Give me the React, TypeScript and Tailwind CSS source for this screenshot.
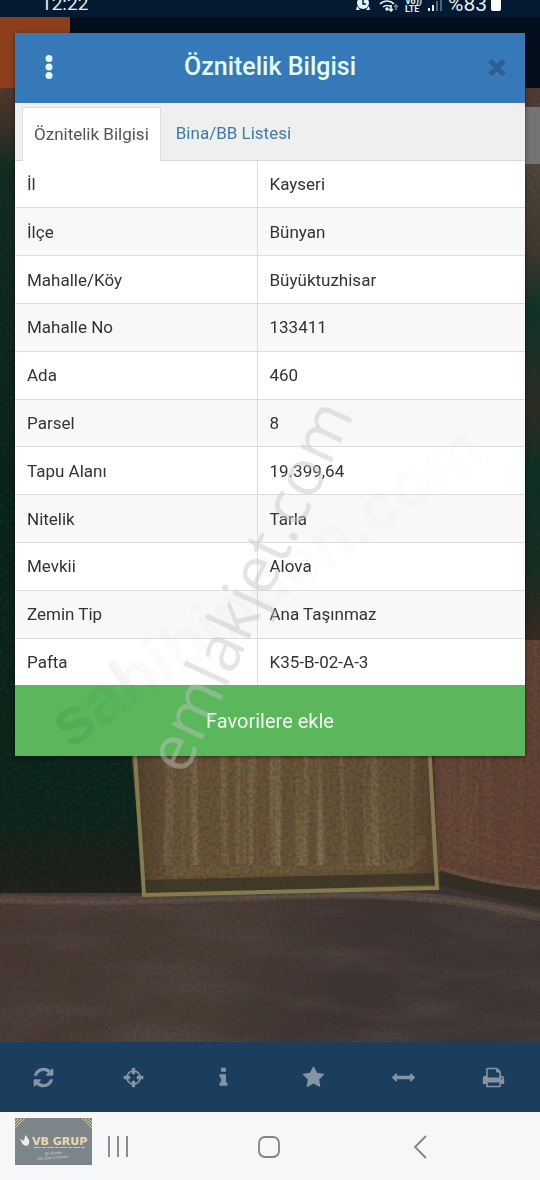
import React from 'react';

const rows: [string, string][] = [
  ['İl', 'Kayseri'],
  ['İlçe', 'Bünyan'],
  ['Mahalle/Köy', 'Büyüktuzhisar'],
  ['Mahalle No', '133411'],
  ['Ada', '460'],
  ['Parsel', '8'],
  ['Tapu Alanı', '19.399,64'],
  ['Nitelik', 'Tarla'],
  ['Mevkii', 'Alova'],
  ['Zemin Tip', 'Ana Taşınmaz'],
  ['Pafta', 'K35-B-02-A-3'],
];

const tools = [
  {
    label: 'Yenile',
    d: 'M1639 1056q0 5-1 7-64 268-268 434.5t-478 166.5q-146 0-282.5-55t-243.5-157l-129 129q-19 19-45 19t-45-19-19-45v-448q0-26 19-45t45-19h448q26 0 45 19t19 45-19 45l-137 137q71 66 161 102t187 36q134 0 250-65t186-179q11-17 53-117 8-23 30-23h192q13 0 22.5 9.5t9.5 22.5zm25-800v448q0 26-19 45t-45 19h-448q-26 0-45-19t-19-45 19-45l138-138q-148-137-349-137-134 0-250 65t-186 179q-11 17-53 117-8 23-30 23h-199q-13 0-22.5-9.5t-9.5-22.5v-7q65-268 270-434.5t480-166.5q146 0 284 55.5t245 156.5l130-129q19-19 45-19t45 19 19 45z',
  },
  {
    label: 'Konum',
    d: 'M1325 1024h-109q-26 0-45-19t-19-45v-128q0-26 19-45t45-19h109q-32-108-112.5-188.5t-188.5-112.5v109q0 26-19 45t-45 19h-128q-26 0-45-19t-19-45v-109q-108 32-188.5 112.5t-112.5 188.5h109q26 0 45 19t19 45v128q0 26-19 45t-45 19h-109q32 108 112.5 188.5t188.5 112.5v-109q0-26 19-45t45-19h128q26 0 45 19t19 45v109q108-32 188.5-112.5t112.5-188.5zm339-192v128q0 26-19 45t-45 19h-143q-37 161-154.5 278.5t-278.5 154.5v143q0 26-19 45t-45 19h-128q-26 0-45-19t-19-45v-143q-161-37-278.5-154.5t-154.5-278.5h-143q-26 0-45-19t-19-45v-128q0-26 19-45t45-19h143q37-161 154.5-278.5t278.5-154.5v-143q0-26 19-45t45-19h128q26 0 45 19t19 45v143q161 37 278.5 154.5t154.5 278.5h143q26 0 45 19t19 45z',
  },
  {
    label: 'Bilgi',
    d: 'M1216 1344v128q0 26-19 45t-45 19h-512q-26 0-45-19t-19-45v-128q0-26 19-45t45-19h64v-384h-64q-26 0-45-19t-19-45v-128q0-26 19-45t45-19h384q26 0 45 19t19 45v576h64q26 0 45 19t19 45zm-128-1152v192q0 26-19 45t-45 19h-256q-26 0-45-19t-19-45v-192q0-26 19-45t45-19h256q26 0 45 19t19 45z',
  },
  {
    label: 'Favoriler',
    d: 'M1728 647q0 22-26 48l-363 354 86 500q1 7 1 20 0 21-10.5 35.5t-30.5 14.5q-19 0-40-12l-449-236-449 236q-22 12-40 12-21 0-31.5-14.5t-10.5-35.5q0-6 2-20l86-500-364-354q-25-27-25-48 0-37 56-46l502-73 225-455q19-41 49-41t49 41l225 455 502 73q56 9 56 46z',
  },
  {
    label: 'Ölçüm',
    d: 'M1792 896q0 26-19 45l-256 256q-19 19-45 19t-45-19-19-45v-128h-1024v128q0 26-19 45t-45 19-45-19l-256-256q-19-19-19-45t19-45l256-256q19-19 45-19t45 19 19 45v128h1024v-128q0-26 19-45t45-19 45 19l256 256q19 19 19 45z',
  },
  {
    label: 'Yazdır',
    d: 'M448 1536h896v-256h-896v256zm0-640h896v-384h-160q-40 0-68-28t-28-68v-160h-640v640zm1152 64q0-26-19-45t-45-19-45 19-19 45 19 45 45 19 45-19 19-45zm128 0v416q0 13-9.5 22.5t-22.5 9.5h-224v160q0 40-28 68t-68 28h-960q-40 0-68-28t-28-68v-160h-224q-13 0-22.5-9.5t-9.5-22.5v-416q0-79 56.5-135.5t135.5-56.5h64v-544q0-40 28-68t68-28h672q40 0 88 20t76 48l152 152q28 28 48 76t20 88v256h64q79 0 135.5 56.5t56.5 135.5z',
  },
];

const closePath =
  'M1490 1322q0 40-28 68l-136 136q-28 28-68 28t-68-28l-294-294-294 294q-28 28-68 28t-68-28l-136-136q-28-28-28-68t28-68l294-294-294-294q-28-28-28-68t28-68l136-136q28-28 68-28t68 28l294 294 294-294q28-28 68-28t68 28l136 136q28 28 28 68t-28 68l-294 294 294 294q28 28 28 68z';

const StatusBar: React.FC = () => (
  <div className="flex h-[17px] items-end justify-between overflow-hidden bg-[#041a30] pl-[41px] pr-[39px] pb-[2px] text-[#e4eef5]">
    <span className="text-[19px] leading-[22px]">12:22</span>
    <div className="flex items-end gap-[6px]">
      <svg className="mb-[4px] h-[16px] w-[14px]" viewBox="0 0 14 16" fill="currentColor">
        <circle cx="7" cy="8" r="6" />
        <path d="M1 11l-1 4h4zM13 11l1 4h-4z" />
        <path d="M7 5v4h3" fill="none" stroke="#041a30" strokeWidth="1.5" />
      </svg>
      <svg className="mb-[3px] ml-[3px] h-[16px] w-[20px]" viewBox="0 0 20 16" fill="none" stroke="currentColor" strokeWidth="1.6">
        <path d="M1 8c4-4 10-4 14 0M4 11c2-2 6-2 8 0" />
        <circle cx="8" cy="13" r="1" fill="currentColor" />
        <path d="M12 9v6M10 13l2 2 2-2" />
        <path d="M17 14V9m-2 2l2-2 2 2" opacity="0.5" />
      </svg>
      <span className="flex flex-col pb-[2px] text-[9px] font-bold leading-[8px]">
        <span>Vo))</span>
        <span>LTE</span>
      </span>
      <svg className="mb-[4px] h-[16px] w-[14px]" viewBox="0 0 14 16" fill="currentColor">
        <path d="M0 13h2v3H0zM4 10h2v6H4z" />
        <path d="M8 6h2v10H8zM12 2h2v14h-2z" opacity="0.35" />
      </svg>
      <span className="flex items-end gap-1">
        <span className="text-[21px] leading-[22px]">%83</span>
        <span className="mb-[4px] h-[18px] w-[10px] rounded-[2px] bg-white" />
      </span>
    </div>
  </div>
);

const SatelliteMap: React.FC = () => (
  <svg className="absolute inset-0 h-full w-full" viewBox="0 88 540 954" preserveAspectRatio="none" aria-hidden="true">
    <defs>
      <linearGradient id="leftField" x1="0" y1="0" x2="0" y2="1">
        <stop offset="0" stopColor="#54392a" />
        <stop offset="0.05" stopColor="#3a3024" />
        <stop offset="0.1" stopColor="#0e2b1f" />
        <stop offset="0.5" stopColor="#052218" />
        <stop offset="0.9" stopColor="#082419" />
        <stop offset="0.96" stopColor="#161f17" />
        <stop offset="1" stopColor="#1f2019" />
      </linearGradient>
      <linearGradient id="rightEdge" x1="0" y1="0" x2="0" y2="1">
        <stop offset="0" stopColor="#513a31" />
        <stop offset="0.12" stopColor="#554a3d" />
        <stop offset="0.3" stopColor="#40382b" />
        <stop offset="0.4" stopColor="#0d3327" />
        <stop offset="0.58" stopColor="#2b2d22" />
        <stop offset="0.7" stopColor="#0b2f23" />
        <stop offset="0.88" stopColor="#172c20" />
        <stop offset="1" stopColor="#39291e" />
      </linearGradient>
      <linearGradient id="soil" gradientUnits="userSpaceOnUse" x1="0" y1="900" x2="420" y2="1060">
        <stop offset="0" stopColor="#483831" />
        <stop offset="0.5" stopColor="#4b3e35" />
        <stop offset="0.8" stopColor="#3f3432" />
        <stop offset="1" stopColor="#403633" />
      </linearGradient>
      <linearGradient id="parcel" x1="0" y1="0" x2="1" y2="0">
        <stop offset="0" stopColor="#4f3f2b" />
        <stop offset="0.15" stopColor="#6b5537" />
        <stop offset="0.55" stopColor="#675434" />
        <stop offset="0.9" stopColor="#645236" />
        <stop offset="1" stopColor="#553c2a" />
      </linearGradient>
      <filter id="darkStreaks" x="0" y="0" width="100%" height="100%">
        <feTurbulence type="fractalNoise" baseFrequency="0.13 0.003" numOctaves="3" seed="5" />
        <feColorMatrix values="0 0 0 0 0.16  0 0 0 0 0.09  0 0 0 0 0.05  3 0 0 0 -1.3" />
      </filter>
      <filter id="lightStreaks" x="0" y="0" width="100%" height="100%">
        <feTurbulence type="fractalNoise" baseFrequency="0.11 0.003" numOctaves="3" seed="12" />
        <feColorMatrix values="0 0 0 0 0.58  0 0 0 0 0.46  0 0 0 0 0.29  3 0 0 0 -1.4" />
      </filter>
      <filter id="soilBands" x="0" y="0" width="100%" height="100%">
        <feTurbulence type="fractalNoise" baseFrequency="0.009 0.035" numOctaves="5" seed="21" />
        <feColorMatrix values="0 0 0 0 0.1  0 0 0 0 0.07  0 0 0 0 0.06  2.4 0 0 0 -1" />
      </filter>
      <filter id="grain" x="0" y="0" width="100%" height="100%">
        <feTurbulence type="fractalNoise" baseFrequency="0.3" numOctaves="3" seed="8" />
        <feColorMatrix values="0 0 0 0 0.03  0 0 0 0 0.03  0 0 0 0 0.03  1.6 0 0 0 -0.6" />
      </filter>
      <clipPath id="parcelClip">
        <path d="M134 740H431l6 134-294 8z" />
      </clipPath>
      <clipPath id="redClip">
        <path d="M433 640h107v245l-50-5-48-12z" />
      </clipPath>
    </defs>
    <rect y="88" width="540" height="954" fill="url(#soil)" />
    <path d="M0 88H145V893H0z" fill="url(#leftField)" />
    <path d="M430 88h110v552H430z" fill="url(#rightEdge)" />
    <path d="M430 640h110v250l-50-6-52-12z" fill="#644334" />
    <path d="M130 740H431l7 148-294 7z" fill="url(#parcel)" />
    <g clipPath="url(#parcelClip)">
      <rect x="145" y="740" width="290" height="125" filter="url(#darkStreaks)" opacity="0.5" />
      <rect x="160" y="740" width="260" height="125" filter="url(#lightStreaks)" opacity="0.3" />
    </g>
    <g clipPath="url(#redClip)">
      <rect x="430" y="640" width="110" height="225" filter="url(#darkStreaks)" opacity="0.5" />
    </g>
    <g fill="none" stroke="#7f6946" strokeWidth="1" opacity="0.45">
      <path d="M376 756c0 50 10 80 32 100M384 756c0 50 8 76 24 92M367 756c2 60 10 88 26 106" />
      <path d="M165 871c80 0 160-2 235-6 14-2 20-12 22-30" strokeWidth="9" opacity="0.6" />
    </g>
    <g fill="none" stroke="#8b5f47" strokeWidth="1" opacity="0.35">
      <path d="M448 840c12 14 50 24 92 28M446 820c14 26 54 34 94 38M452 806c14 30 50 36 88 40" />
      <path d="M474 756l-26 70M482 760l-14 80" />
    </g>
    <path d="M144 880l290-7 6 11-294 11zM440 868l100 22v18l-100-22z" fill="#2c2a1d" opacity="0.6" />
    <path d="M0 899c80 4 160 2 260-3 100-5 190-2 280 21" fill="none" stroke="#57483f" strokeWidth="9" />
    <path d="M0 900c80 4 160 2 260-3 100-5 190-2 280 19" fill="none" stroke="#6e5d52" strokeWidth="3" opacity="0.4" />
    <path d="M440 868c30 10 60 16 100 20" fill="none" stroke="#6c5140" strokeWidth="4" />
    <rect y="906" width="540" height="136" filter="url(#soilBands)" opacity="0.6" />
    <rect y="88" width="540" height="954" filter="url(#grain)" opacity="0.55" />
    <path d="M134 740l10 155 293-7-8-148" fill="none" stroke="#857b4f" strokeWidth="4" />
  </svg>
);

const Watermarks: React.FC = () => (
  <svg className="pointer-events-none absolute inset-0 h-full w-full" viewBox="0 0 540 1180" preserveAspectRatio="none" aria-hidden="true">
    <defs>
      <linearGradient id="fade" gradientUnits="userSpaceOnUse" x1="0" y1="0" x2="500" y2="0">
        <stop offset="0" stopColor="#1f6b30" stopOpacity="0.15" />
        <stop offset="0.14" stopColor="#4f7f55" stopOpacity="0.1" />
        <stop offset="0.22" stopColor="#808080" stopOpacity="0.03" />
        <stop offset="1" stopColor="#808080" stopOpacity="0.02" />
      </linearGradient>
    </defs>
    <g transform="translate(70 750) rotate(-35)" fontFamily="Liberation Sans" fontWeight="bold" fontSize="67">
      <text fill="url(#fade)">sahibinden.com</text>
    </g>
    <g transform="translate(185 777) rotate(-65)" fontFamily="Open Sans" fontSize="64">
      <text fill="#c4c4c4" fillOpacity="0.45">emlakjet.com</text>
    </g>
  </svg>
);

const InfoDialog: React.FC = () => (
  <section role="dialog" aria-labelledby="dialog-title" className="absolute inset-x-[15px] top-[33px] bg-white shadow-[0_1px_4px_rgba(0,0,0,0.5)]">
    <header className="flex h-[70px] items-center bg-[#3579b8] px-[10px] pb-[2px]">
      <button type="button" aria-label="Menü" className="flex h-9 w-12 items-center justify-center text-[#e2fcff]">
        <svg className="h-6 w-2" viewBox="0 0 8 24" fill="currentColor">
          <circle cx="4" cy="3.500" r="3.500" />
          <circle cx="4" cy="12" r="3.500" />
          <circle cx="4" cy="20.500" r="3.500" />
        </svg>
      </button>
      <h1 id="dialog-title" className="flex-1 pr-3 text-center text-[25px] font-medium leading-8 text-[#e2fcff]">Öznitelik Bilgisi</h1>
      <button type="button" aria-label="Kapat" className="flex h-9 w-9 items-center justify-center text-[#2a6093]">
        <svg className="h-[26px] w-[26px]" viewBox="0 0 1792 1792" fill="currentColor">
          <path d={closePath} transform="translate(0 60)" fill="#5c93c4" />
          <path d={closePath} />
        </svg>
      </button>
    </header>

    <div role="tablist" className="flex h-[58px] items-end border-b border-[#d8d8d8] bg-[#efefef] pl-[7px] text-[17px]">
      <button type="button" role="tab" aria-selected="true" className="-mb-px h-[54px] border border-b-0 border-[#dddddd] bg-white px-[11px] text-[#555555]">
        Öznitelik Bilgisi
      </button>
      <button type="button" role="tab" aria-selected="false" className="h-[53px] px-[15px] text-[#3f7ba6]">
        Bina/BB Listesi
      </button>
    </div>

    <table className="h-[524px] w-full border-collapse text-left text-[17px] leading-6 text-[#333333]">
      <tbody>
        {rows.map(([name, value]) => (
          <tr key={name} className="border-b border-[#dddddd] last:border-b-0 even:bg-[#f8f8f8]">
            <th scope="row" className="w-[242px] border-r border-[#dddddd] px-3 font-normal">{name}</th>
            <td className="px-3">{value}</td>
          </tr>
        ))}
      </tbody>
    </table>

    <button type="button" className="block h-[71px] w-full bg-[#5ab75c] text-xl text-[#f0fff0]">
      Favorilere ekle
    </button>
  </section>
);

const Toolbar: React.FC = () => (
  <nav className="grid h-[70px] grid-cols-6 bg-[#1b3e5e]">
    {tools.map(({ label, d }) => (
      <button key={label} type="button" aria-label={label} className="flex items-center justify-center pr-[3px] text-[#8693a3]">
        <svg className="h-[23px] w-[23px]" viewBox="0 0 1792 1792" fill="currentColor">
          <path d={d} />
        </svg>
      </button>
    ))}
  </nav>
);

const CompanyBadge: React.FC = () => (
  <svg className="h-[47px] w-[77px]" viewBox="0 0 77 47" role="img" aria-label="VB Grup">
    <rect width="77" height="47" fill="#7c858a" />
    <path d="M0 4l4-4M0 7l7-7M0 10L10 0M77 4l-4-4M77 7l-7-7M77 10L67 0" stroke="#dcc690" strokeWidth="1" />
    <path d="M10 17c3 3 5 5 4 9-2 3-6 2-6-1 0-2 2-3 2-8zM5 21l4 2-1 4z" fill="#f2ede0" />
    <text x="17" y="27" fontFamily="DejaVu Sans" fontWeight="700" fontSize="11" fill="#ecd9ae">VB GRUP</text>
    <path d="M19 29.500h52" stroke="#c9c4b4" strokeWidth="1" strokeDasharray="7 1 4 1" />
    <text x="30" y="37" fontFamily="Lato" fontStyle="italic" fontSize="4" fill="#c9ced1" transform="rotate(-4 30 37)">Bu Alanda</text>
    <text x="22" y="42" fontFamily="Lato" fontStyle="italic" fontSize="4" fill="#c9ced1" transform="rotate(-4 22 42)">Size Özel Çözümler</text>
  </svg>
);

const SystemNav: React.FC = () => (
  <div className="flex h-[68px] items-start bg-[#f6f7f9] pl-[15px] pr-[111px] pt-[6px] text-[#828284]">
    <CompanyBadge />
    <div className="flex flex-1 items-center justify-between pl-[15px] pt-[17px]">
      <button type="button" aria-label="Son uygulamalar">
        <svg className="h-6 w-[22px]" viewBox="0 0 22 24" stroke="currentColor" strokeWidth="1.8">
          <path d="M2 1v21M11 1v21M20 1v21" />
        </svg>
      </button>
      <button type="button" aria-label="Ana ekran">
        <svg className="h-6 w-6" viewBox="0 0 24 24" fill="none" stroke="currentColor" strokeWidth="1.8">
          <rect x="2" y="2" width="20" height="20" rx="6" />
        </svg>
      </button>
      <button type="button" aria-label="Geri">
        <svg className="h-6 w-5" viewBox="0 0 20 24" fill="none" stroke="currentColor" strokeWidth="1.8">
          <path d="M17 1L6 12l11 11" />
        </svg>
      </button>
    </div>
  </div>
);

export default function App() {
  return (
    <main className="relative flex min-h-screen flex-col overflow-hidden bg-[#020d1a] font-['Roboto',sans-serif]">
      <StatusBar />
      <div className="flex h-[71px] bg-[#020e1c]">
        <div className="w-[70px] bg-[#8c3f1a]" />
      </div>
      <div className="relative flex flex-1 justify-end pt-[19px]">
        <SatelliteMap />
        <div className="relative h-[57px] w-10 bg-[#747474]" />
      </div>
      <Toolbar />
      <SystemNav />
      <InfoDialog />
      <Watermarks />
    </main>
  );
}
